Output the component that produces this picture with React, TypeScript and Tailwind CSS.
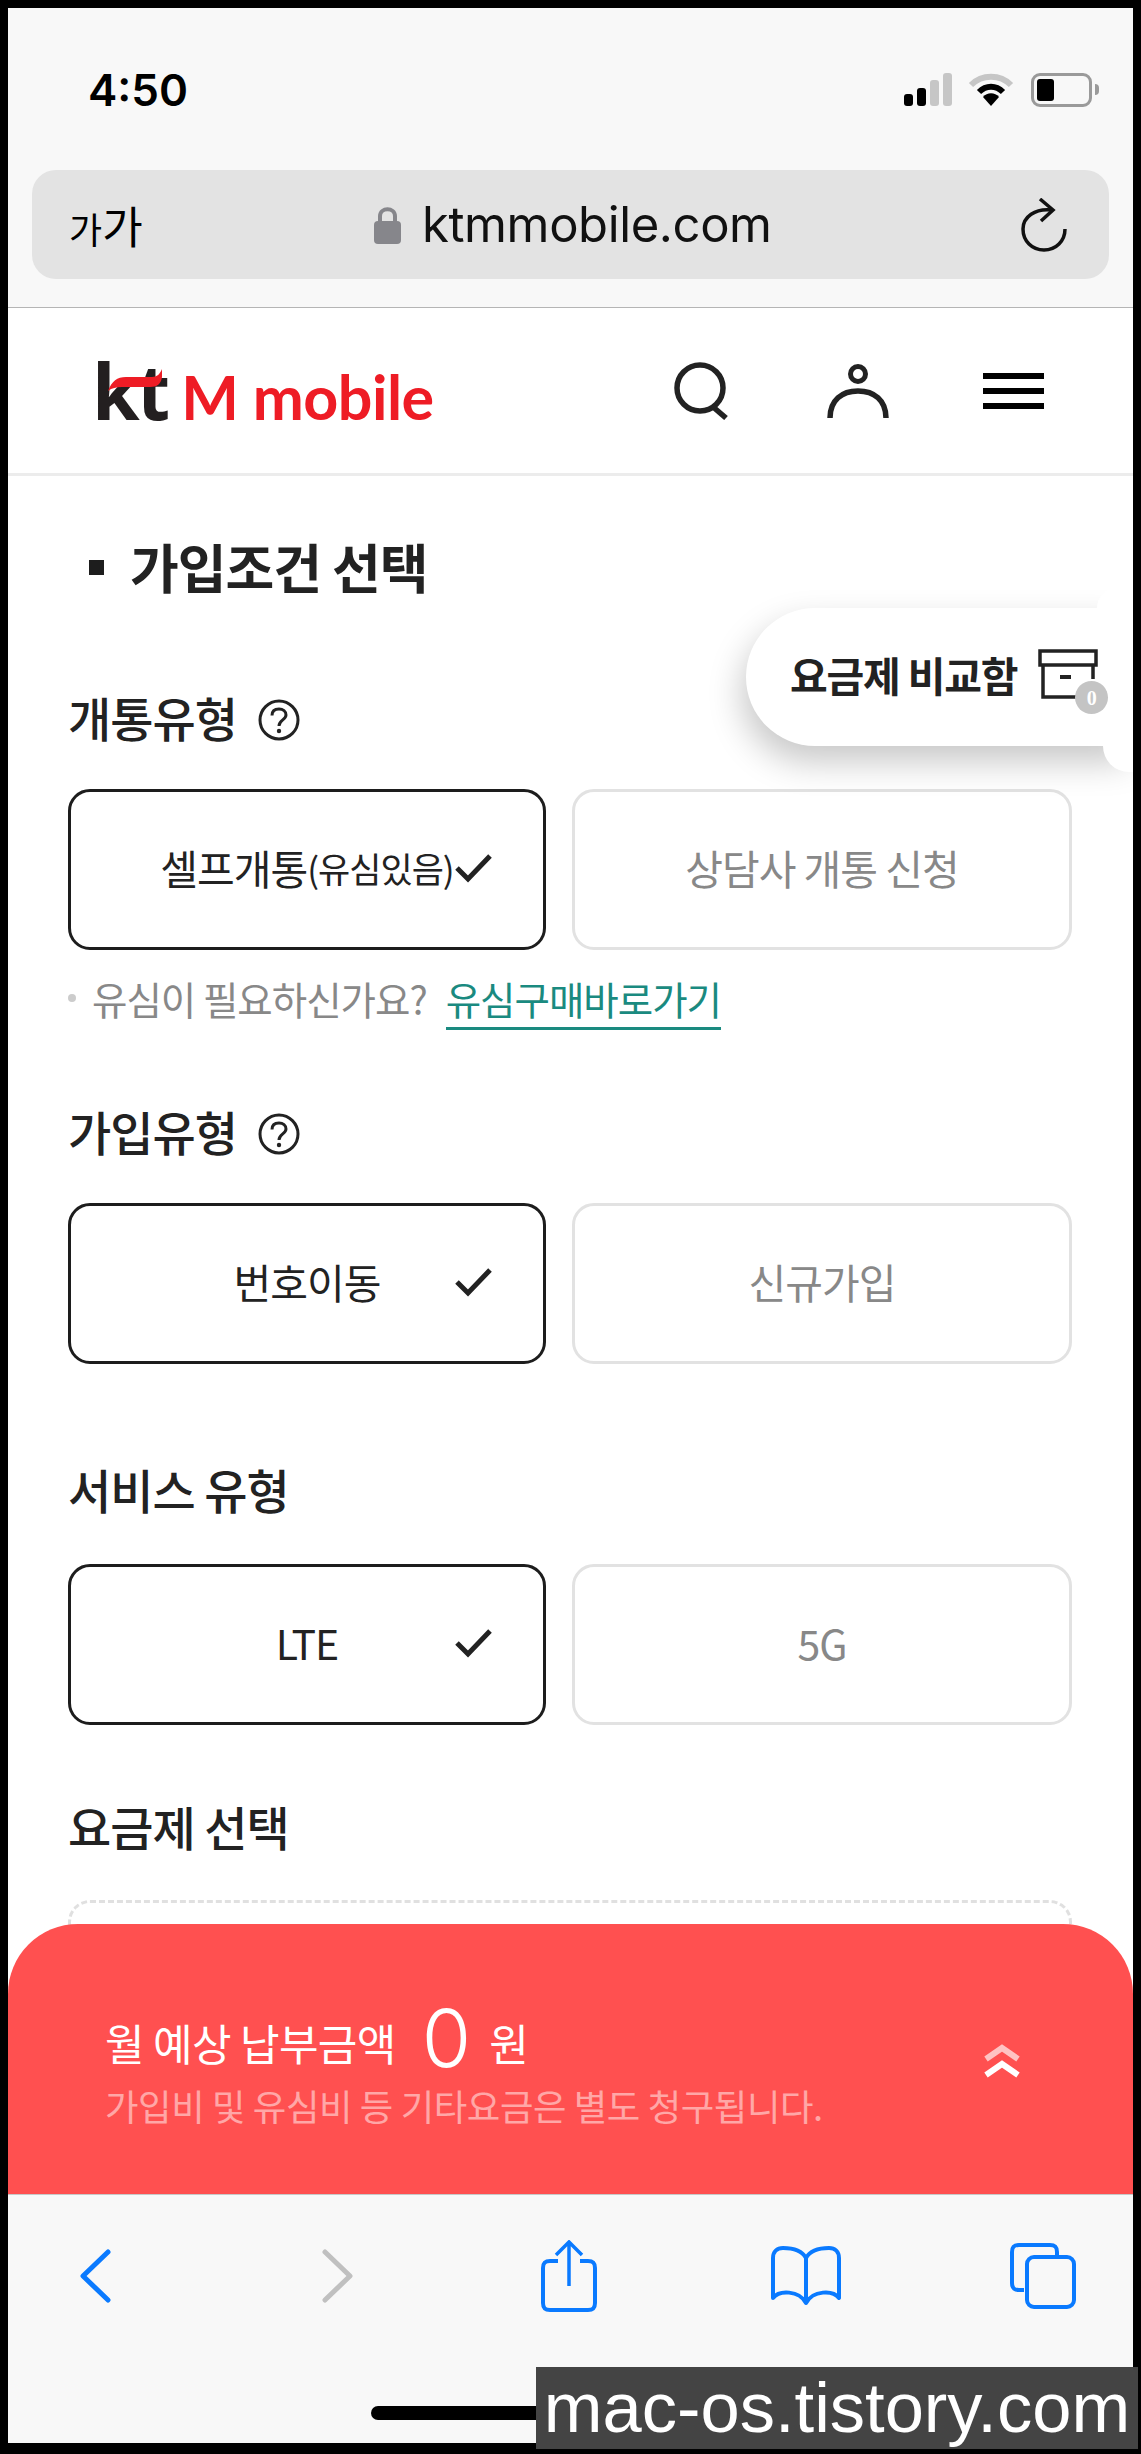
const OptionButton = ({ selected, children }: { selected?: boolean; children: React.ReactNode }) => (
  <button
    className={`relative h-[161px] shrink-0 rounded-[22px] border-[3px] pb-[3px] flex items-center justify-center text-[41px] tracking-[-1px] ${
      selected ? 'w-[478px] border-[#1d1d1d] text-[#222]' : 'w-[500px] border-[#e2e2e2] text-[#888]'
    }`}
  >
    {children}
    {selected && (
      <svg className="absolute left-[384px] top-[61px] w-[38px] h-[30px]" viewBox="0 0 38 30" fill="none">
        <path d="M2 15 L13 26 L35 3" stroke="#222" strokeWidth="5" />
      </svg>
    )}
  </button>
);

const SectionLabel = ({ children, help, className }: { children: React.ReactNode; help?: boolean; className: string }) => (
  <div className={`flex items-center h-[60px] text-[47px] font-medium tracking-[-1px] text-[#222] ${className}`}>
    <span>{children}</span>
    {help && (
      <svg className="ml-[21px] mt-[6px] w-[42px] h-[42px]" viewBox="0 0 42 42" fill="none">
        <circle cx="21" cy="21" r="19" stroke="#222" strokeWidth="3" />
        <path d="M14 16.5 C14 11.5 17.5 10 21 10 C25 10 28 12.5 28 16 C28 21 21 21 21 27" stroke="#222" strokeWidth="3" />
        <circle cx="21" cy="32" r="2.2" fill="#222" />
      </svg>
    )}
  </div>
);

const StatusIcons = () => (
  <div className="flex items-center">
    <div className="flex items-end gap-[4px] h-[33px]">
      <div className="w-[9px] h-[12px] rounded-[3px] bg-black" />
      <div className="w-[9px] h-[18px] rounded-[3px] bg-black" />
      <div className="w-[9px] h-[26px] rounded-[3px] bg-[#c6c6c6]" />
      <div className="w-[9px] h-[33px] rounded-[3px] bg-[#c6c6c6]" />
    </div>
    <svg className="ml-[16px] w-[46px] h-[33px]" viewBox="0 0 46 33" fill="none">
      <path d="M3 12 C14 1 32 1 43 12" stroke="#c6c6c6" strokeWidth="6" />
      <path d="M11 19 C18 12 28 12 35 19" stroke="#000" strokeWidth="6" />
      <path d="M15 24 C19 19 27 19 31 24 L23 33 Z" fill="#000" />
    </svg>
    <div className="ml-[17px] w-[61px] h-[34px] rounded-[9px] border-[3px] border-[#9a9a9a] p-[3px]">
      <div className="w-[17px] h-full rounded-[3px] bg-black" />
    </div>
    <div className="ml-[3px] w-[4px] h-[11px] rounded-r-full bg-[#9a9a9a]" />
  </div>
);

export default function App() {
  return (
    <div className="relative w-[1141px] h-[2454px] bg-black pt-[8px] px-[8px] pb-[11px] flex flex-col overflow-hidden font-['Noto_Sans_CJK_KR','Noto_Sans',sans-serif]">
      {/* Safari top */}
      <div className="h-[300px] shrink-0 bg-[#f8f8f8] border-b border-[#b5b5b5]">
        <div className="flex items-center justify-between h-[33px] mt-[65px] pl-[80px] pr-[34px]">
          <span className="text-[44px] leading-none font-semibold text-black font-['Inter',sans-serif]">4:50</span>
          <StatusIcons />
        </div>
        <div className="mt-[64px] mx-[24px] h-[109px] rounded-[24px] bg-[#e3e3e3] flex items-center justify-between pl-[37px] pr-[42px]">
          <span className="text-black leading-none">
            <span className="text-[36px]">가</span>
            <span className="text-[44px]">가</span>
          </span>
          <div className="flex items-center gap-[21px] mr-[18px]">
            <svg className="w-[27px] h-[38px]" viewBox="0 0 27 38" fill="none">
              <path d="M6 16 V10 C6 1 21 1 21 10 V16" stroke="#86868b" strokeWidth="4" />
              <rect y="15" width="27" height="23" rx="4" fill="#86868b" />
            </svg>
            <span className="text-[49px] leading-none text-[#111] tracking-[-0.4px] font-['Inter',sans-serif]">ktmmobile.com</span>
          </div>
          <svg className="w-[46px] h-[54px]" viewBox="0 0 46 54" fill="none">
            <path d="M31 12 C14 10 2 19 2 31 C2 43 11 52 23 52 C35 52 44 43 44 31" stroke="#111" strokeWidth="3.5" />
            <path d="M19 1 L32 12 L20 23" stroke="#111" strokeWidth="3.5" />
          </svg>
        </div>
      </div>

      {/* Site header */}
      <header className="h-[168px] shrink-0 bg-white border-b-[3px] border-[#ececec] flex items-center pl-[84px]">
        <div className="relative flex items-baseline w-[335px] h-[70px] whitespace-nowrap">
          <span className="text-[77px] leading-[70px] font-bold text-[#231f20] tracking-[-3px] font-['Open_Sans',sans-serif]">kt</span>
          <svg className="absolute left-[16px] top-[13px] w-[54px] h-[22px]" viewBox="0 0 54 22">
            <path d="M0 22 C4 12 9 8 18 8 L44 8 C49 8 52 5 54 0 L54 8 C53 15 49 18 42 18 L14 18 C8 18 4 19 0 22 Z" fill="#ee1c25" />
          </svg>
          <span className="ml-[14px] text-[61px] leading-[70px] font-bold text-[#ee1c25] tracking-[-0.5px] font-['Lato',sans-serif]">M mobile</span>
        </div>
        <svg className="ml-[247px] w-[56px] h-[58px]" viewBox="0 0 56 58" fill="none">
          <circle cx="26" cy="26" r="23" stroke="#222" strokeWidth="5.5" />
          <path d="M38 44 L52 56" stroke="#222" strokeWidth="5.5" />
        </svg>
        <svg className="ml-[97px] w-[62px] h-[54px]" viewBox="0 0 62 54" fill="none">
          <circle cx="31" cy="10" r="7.5" stroke="#222" strokeWidth="5" />
          <path d="M3 54 C3 36 15 27 31 27 C47 27 59 36 59 54" stroke="#222" strokeWidth="5.5" />
        </svg>
        <div className="ml-[94px] flex flex-col gap-[9px]">
          <div className="w-[61px] h-[6px] bg-black" />
          <div className="w-[61px] h-[6px] bg-black" />
          <div className="w-[61px] h-[6px] bg-black" />
        </div>
      </header>

      {/* Form */}
      <main className="relative flex-1 min-h-0 bg-white overflow-hidden px-[60px]">
        <div className="flex items-center h-[60px] mt-[61px] ml-[21px]">
          <div className="w-[15px] h-[15px] bg-[#1d1d1d]" />
          <h1 className="ml-[26px] text-[53px] font-bold tracking-[-1px] text-[#222]">가입조건 선택</h1>
        </div>

        <SectionLabel help className="mt-[90px]">개통유형</SectionLabel>
        <div className="flex gap-[26px] mt-[42px]">
          <OptionButton selected>
            셀프개통<span className="text-[35px]">(유심있음)</span>
          </OptionButton>
          <OptionButton>상담사 개통 신청</OptionButton>
        </div>
        <div className="flex items-start h-[50px] mt-[23px] text-[38.5px] tracking-[-1px] text-[#888]">
          <div className="mt-[21px] w-[8px] h-[8px] rounded-full bg-[#ccc]" />
          <span className="ml-[16px] leading-[50px]">유심이 필요하신가요?</span>
          <a className="ml-[19px] leading-[50px] pb-[4px] border-b-[3px] border-[#1a8a80] text-[#1a8a80]">유심구매바로가기</a>
        </div>

        <SectionLabel help className="mt-[78px]">가입유형</SectionLabel>
        <div className="flex gap-[26px] mt-[42px]">
          <OptionButton selected>번호이동</OptionButton>
          <OptionButton>신규가입</OptionButton>
        </div>

        <SectionLabel className="mt-[95px]">서비스 유형</SectionLabel>
        <div className="flex gap-[26px] mt-[45px]">
          <OptionButton selected>LTE</OptionButton>
          <OptionButton>5G</OptionButton>
        </div>

        <SectionLabel className="mt-[71px]">요금제 선택</SectionLabel>
        <div className="mt-[44px] h-[160px] w-[1004px] rounded-[22px] border-[3px] border-dashed border-[#e0e0e0]" />

        {/* Floating compare button */}
        <div className="absolute top-[132px] right-0 w-[387px] h-[138px] rounded-l-[69px] bg-white shadow-[-4px_16px_34px_rgba(0,0,0,0.22)] flex items-center pl-[44px]">
          <span className="text-[41px] font-bold tracking-[-1.2px] text-[#222] mb-[4px]">요금제 비교함</span>
          <div className="relative ml-[21px] mb-[6px] w-[60px] h-[50px]">
            <svg className="w-[60px] h-[50px]" viewBox="0 0 60 50" fill="none">
              <path d="M2 2 H58 V16 H2 Z" stroke="#222" strokeWidth="3.5" />
              <path d="M5 16 V48 H38 M55 16 V30" stroke="#222" strokeWidth="3.5" />
              <path d="M22 28 H33" stroke="#222" strokeWidth="4" />
            </svg>
            <div className="absolute left-[37px] top-[32px] w-[33px] h-[33px] rounded-full bg-[#c4c4c4] flex items-center justify-center text-[20px] font-bold text-white font-['Liberation_Serif',serif]">0</div>
          </div>
        </div>
        {/* the shadow image has rounded ends on the right */}
        <div className="absolute top-[112px] right-0 w-[36px] h-[20px] bg-white rounded-tl-[30px]" />
        <div className="absolute top-[270px] right-0 w-[30px] h-[26px] bg-white rounded-bl-[30px]" />
      </main>

      {/* Monthly fee panel */}
      <section className="relative -mt-[70px] h-[270px] shrink-0 rounded-t-[70px] bg-[#ff5050] flex items-center justify-between pl-[97px] pr-[112px]">
        <div className="text-white mt-[12px]">
          <div className="flex items-center h-[70px]">
            <span className="text-[43px] tracking-[-0.6px] mt-[8px]">월 예상 납부금액</span>
            <span className="ml-[26px] text-[80px] leading-none font-light font-['Inter',sans-serif]">0</span>
            <span className="ml-[18px] text-[43px] mt-[8px]">원</span>
          </div>
          <p className="mt-[10px] text-[36.4px] leading-[44px] tracking-[-0.4px] text-white/50">가입비 및 유심비 등 기타요금은 별도 청구됩니다.</p>
        </div>
        <svg className="w-[38px] h-[34px] mt-[4px]" viewBox="0 0 38 34" fill="none">
          <path d="M3 15 L19 4 L35 15" stroke="#fff" strokeOpacity="0.65" strokeWidth="6" />
          <path d="M3 31 L19 20 L35 31" stroke="#fff" strokeWidth="6" />
        </svg>
      </section>

      {/* Safari toolbar */}
      <div className="h-[249px] shrink-0 bg-[#f8f8f8] border-t border-[#c8c8c8]">
        <div className="grid grid-cols-5 w-[1185px] -ml-[32px] h-[162px] items-center justify-items-center">
          <svg className="w-[32px] h-[54px]" viewBox="0 0 32 54" fill="none">
            <path d="M29 3 L4 27 L29 51" stroke="#0a7aff" strokeWidth="5" strokeLinecap="round" strokeLinejoin="round" />
          </svg>
          <svg className="ml-[12px] w-[32px] h-[54px]" viewBox="0 0 32 54" fill="none">
            <path d="M3 3 L28 27 L3 51" stroke="#c0c0c0" strokeWidth="5" strokeLinecap="round" strokeLinejoin="round" />
          </svg>
          <svg className="w-[56px] h-[72px]" viewBox="0 0 56 72" fill="none">
            <path d="M17 21 H9 C4 21 2 23 2 28 V63 C2 68 4 70 9 70 H47 C52 70 54 68 54 63 V28 C54 23 52 21 47 21 H39" stroke="#0a7aff" strokeWidth="4" />
            <path d="M28 3 V46 M15 15 L28 2 L41 15" stroke="#0a7aff" strokeWidth="3.5" />
          </svg>
          <svg className="w-[70px] h-[60px]" viewBox="0 0 70 60" fill="none">
            <path d="M35 12 C30 3 20 2 12 2 C6 2 2 6 2 12 V52 C8 44 28 44 35 57 C42 44 62 44 68 52 V12 C68 6 64 2 58 2 C50 2 40 3 35 12 Z M35 12 V56" stroke="#0a7aff" strokeWidth="4" strokeLinejoin="round" />
          </svg>
          <svg className="w-[66px] h-[66px]" viewBox="0 0 66 66" fill="none">
            <path d="M14 47 H9 C4 47 2 45 2 40 V9 C2 4 4 2 9 2 H40 C45 2 47 4 47 9 V14" stroke="#0a7aff" strokeWidth="4" />
            <rect x="17" y="14" width="47" height="50" rx="7" stroke="#0a7aff" strokeWidth="4" />
          </svg>
        </div>
        <div className="mt-[49px] mx-auto w-[400px] h-[14px] rounded-full bg-black" />
      </div>

      {/* Watermark */}
      <div className="absolute left-[536px] top-[2367px] w-[602px] h-[82px] bg-[#444] flex items-center justify-center text-[70.5px] leading-none text-white font-['Liberation_Sans',sans-serif]">mac-os.tistory.com</div>
    </div>
  );
}
